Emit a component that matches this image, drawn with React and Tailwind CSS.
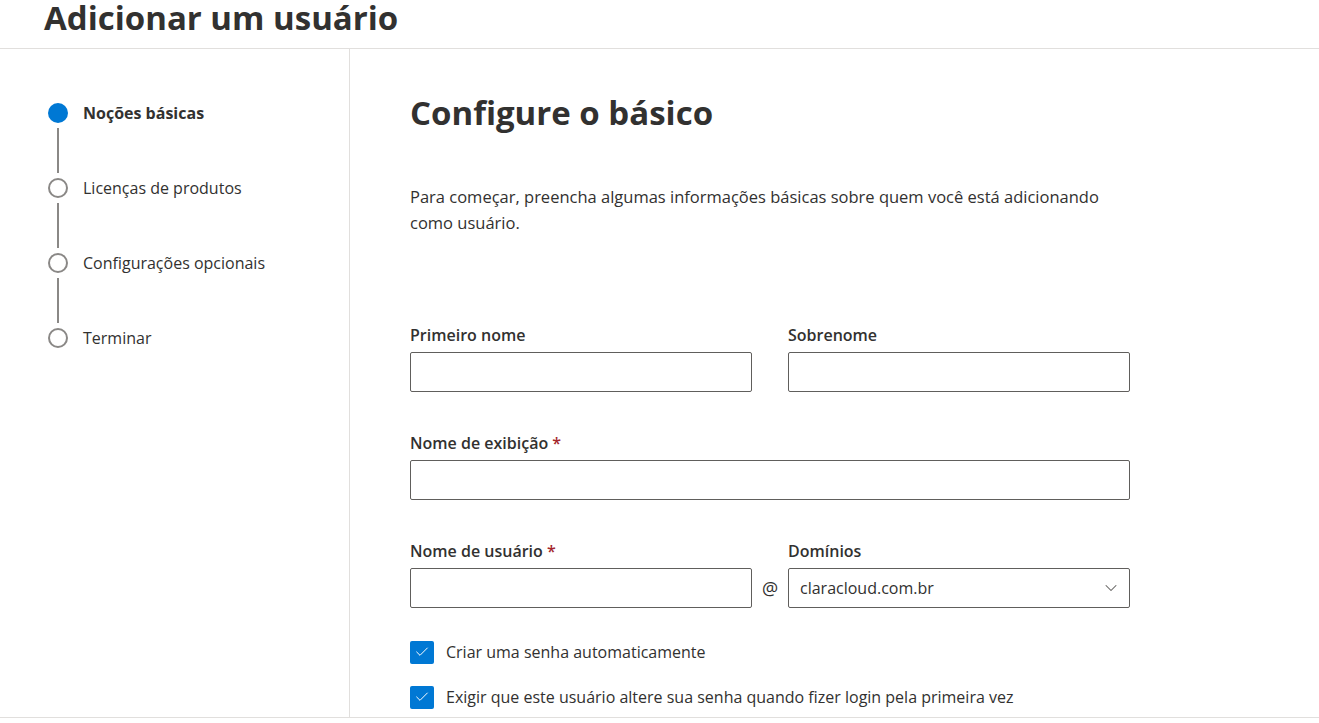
import { ChevronDown, Check } from 'lucide-react'

const STEPS = [
  { label: 'Noções básicas', active: true },
  { label: 'Licenças de produtos' },
  { label: 'Configurações opcionais' },
  { label: 'Terminar' },
]

function Field({ label, required, className = '' }) {
  return (
    <div className={className}>
      <label className="block text-[16px] font-semibold leading-[22px] mb-[6px]">
        {label}
        {required && <span className="text-[#a4262c]"> *</span>}
      </label>
      <input type="text" className="w-full h-[40px] border border-[#605e5c] rounded-[2px] px-3 bg-white outline-none" />
    </div>
  )
}

function Checkbox({ label }) {
  return (
    <label className="flex items-center gap-[12px] h-[24px]">
      <span className="w-[24px] h-[23px] rounded-[2px] bg-[#0078d4] flex items-center justify-center">
        <Check className="w-[16px] h-[16px] text-white" strokeWidth={1.5} />
      </span>
      <span className="text-[16px] leading-[22px]">{label}</span>
    </label>
  )
}

export default function App() {
  return (
    <div className="h-[723px] overflow-hidden bg-white text-[#323130]" style={{ fontFamily: '"Open Sans", "Noto Sans", sans-serif' }}>
      <div className="h-[49px] border-b border-[#e1dfdd] pl-[44px] pt-[1px]">
        <h1 className="text-[33px] font-bold leading-[34px]">Adicionar um usuário</h1>
      </div>

      <div className="flex h-[669px] border-b border-[#e1dfdd]">
        {/* Stepper */}
        <div className="w-[350px] shrink-0 border-r border-[#e1dfdd] pl-[48px] pt-[54px]">
          {STEPS.map((s, i) => (
            <div key={s.label} className="flex">
              <div className="flex flex-col items-center w-[20px]">
                {s.active ? (
                  <span className="w-[20px] h-[20px] rounded-full bg-[#0078d4]" />
                ) : (
                  <span className="w-[20px] h-[20px] rounded-full border-2 border-[#8a8886] bg-white" />
                )}
                {i < STEPS.length - 1 && <span className="w-[2px] h-[45px] bg-[#8a8886] my-[5px]" />}
              </div>
              <span className={`ml-[15px] text-[16px] leading-[20px] ${s.active ? 'font-bold' : ''}`}>{s.label}</span>
            </div>
          ))}
        </div>

        {/* Form */}
        <div className="flex-1 pl-[60px] pt-[44px]">
          <h2 className="text-[33px] font-bold leading-[40px]">Configure o básico</h2>
          <p className="mt-[51px] w-[700px] text-[16.5px] leading-[26px]">
            Para começar, preencha algumas informações básicas sobre quem você está adicionando como usuário.
          </p>

          <div className="w-[720px] mt-[88px]">
            <div className="grid grid-cols-2 gap-x-[36px]">
              <Field label="Primeiro nome" />
              <Field label="Sobrenome" />
            </div>
            <Field label="Nome de exibição" required className="mt-[40px]" />

            <div className="flex mt-[40px] items-end">
              <Field label="Nome de usuário" required className="w-[342px]" />
              <span className="w-[36px] h-[40px] flex items-center justify-center text-[18px]">@</span>
              <div className="w-[342px]">
                <label className="block text-[16px] font-semibold leading-[22px] mb-[6px]">Domínios</label>
                <div className="h-[40px] border border-[#605e5c] rounded-[2px] flex items-center justify-between pl-[11px] pr-[8px]">
                  <span className="text-[16px]">claracloud.com.br</span>
                  <ChevronDown className="w-[20px] h-[20px] text-[#605e5c]" strokeWidth={1.25} />
                </div>
              </div>
            </div>

            <div className="mt-[32px] flex flex-col gap-[21px]">
              <Checkbox label="Criar uma senha automaticamente" />
              <Checkbox label="Exigir que este usuário altere sua senha quando fizer login pela primeira vez" />
            </div>
          </div>
        </div>
      </div>
    </div>
  )
}
